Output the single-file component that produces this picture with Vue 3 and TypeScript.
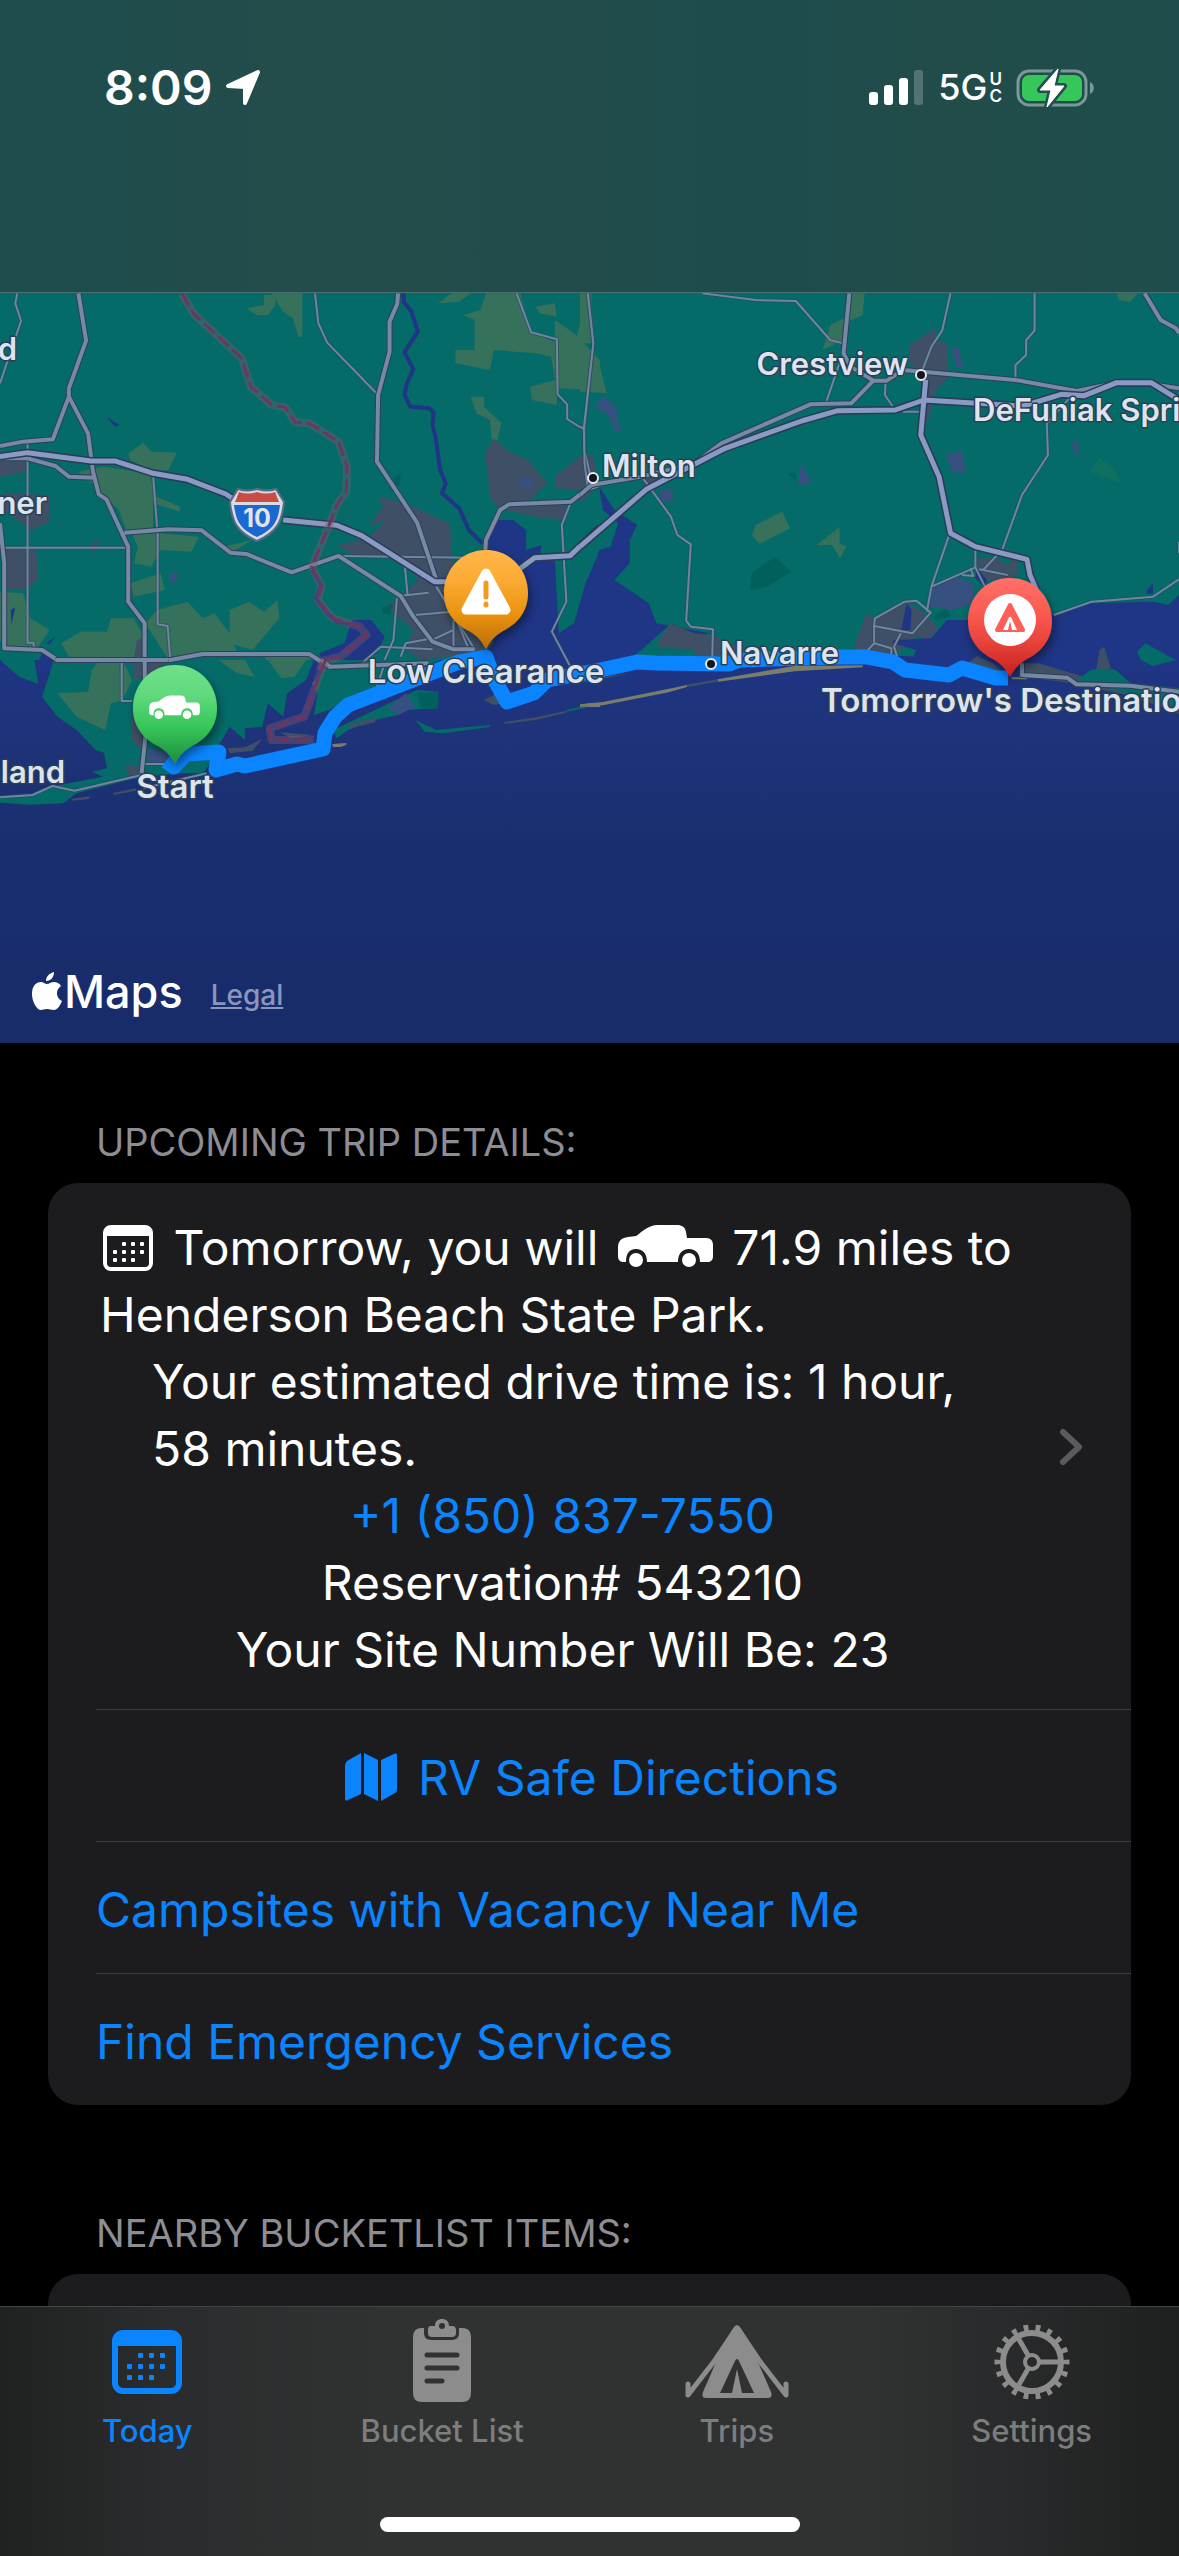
<script setup lang="ts">
interface Shape { fill: string; d: string }
interface Tile {
  id: string
  at: string
  areas: Shape[]
  river?: string
  border?: string
  minor: string
  main?: string
  highway?: string
}
interface Label { text: string; x: number; y: number; anchor: 'start' | 'middle' | 'end'; big?: boolean }

const OLIVE = '#36715b'
const URBAN = '#3f4f66'
const SLATE = '#36517f'
const WATER = '#1f3585'
const LAND = '#046b69'
const FOREST = '#02605c'
const SAND = '#7b7d6c'

const tiles: Tile[] = [
  {
    id: 'northwest',
    at: 'translate(0 -3) scale(.3827 .3333)',
    areas: [
      { fill: OLIVE, d: 'M645 55L690 45V15H720V45L700 75H670ZM710 10H790V140H780L765 85 740 65ZM1145 40L1180 10H1230L1200 35ZM1210 75L1255 60 1270 10H1360L1385 125 1450 155V90L1500 130 1568 210V300L1455 295V345L1390 330 1385 290 1450 270 1440 200 1400 190 1290 180 1280 240 1190 220V180H1240V90ZM1530 10H1545L1550 160 1505 150 1520 80ZM1230 320H1265V350L1310 400 1300 450H1285L1280 390 1245 370ZM335 490L375 458 395 485 462 488 440 540 400 545 340 510ZM1400 50L1450 40 1455 80 1410 70Z' },
      { fill: OLIVE, d: 'M205 545L270 530 390 550 410 620 470 650V665L400 640V720H330L310 660 240 580ZM580 770L660 750 600 790ZM345 730H420L520 740 500 785 420 780 395 830 350 820 360 770ZM340 880L420 850 430 900 350 920ZM0 905L60 910 80 985 130 1020 100 1070H20L0 1050ZM160 1060L210 1025H280L290 985H350L370 1030 375 1140H200ZM410 960L490 935 530 985 560 970 600 1030 620 1090 440 1110 380 1000ZM600 960L650 935 690 965 725 930 730 985 660 1080 600 1060ZM690 1090L820 1085 800 1140H700Z' },
      { fill: URBAN, d: 'M0 510L70 515 68 545 0 560ZM10 610L130 615V695L80 720 10 660ZM10 780H95L100 870 60 900H20ZM1268 490L1290 445 1330 485 1380 510 1430 580 1390 625 1305 655 1280 620ZM1450 560L1520 495H1550L1568 600 1450 595ZM1320 640H1480V690L1400 680 1320 660ZM880 765L960 745 1010 690 965 710 1000 650 990 620 1060 640 1175 700 1180 780 1170 870 1120 900 1040 800H930ZM1010 950L1060 905 1160 800 1300 880V1080L1100 1110 1060 1080 1080 1020ZM235 760L262 750 245 792ZM358 1050L378 1040V1140H345Z' },
      { fill: SLATE, d: 'M1358 560H1393V593H1358ZM445 850L465 845 460 875 442 878Z' },
      { fill: WATER, d: 'M1265 760L1290 690H1340L1375 720V780L1415 765 1410 800 1450 815 1460 1030 1500 1000 1530 880 1568 780V1140H1220L1290 1060 1260 780ZM900 1060L920 990H970L1005 1040 985 1090 900 1140H850L835 1090ZM90 1140L110 1090 150 1115V1140ZM280 382L312 405 300 410ZM28 960L40 952 30 1003ZM120 1060L145 1040 130 1062Z' },
      { fill: FOREST, d: 'M1030 560L1048 553 1042 590 1030 585ZM1000 950L1025 940 1020 975 1000 970Z' },
    ],
    river: 'M1055 10V35L1075 65 1092 125 1057 187 1080 237 1062 285 1057 315 1072 350 1122 355 1133 367 1130 405 1138 440 1150 540 1165 580 1155 610 1200 655 1225 720 1260 760M815 840L840 885 825 925 855 970 880 995 930 1010',
    border: 'M475 10L505 70 632 205 655 290 710 345 745 352 772 397 808 400 885 455 907 530 905 605 880 645 860 705 815 830 840 890 830 930 870 985 940 1010 958 1035 890 1100 845 1112 835 1140',
    minor: 'M45 10L40 40 55 93 35 160 0 280M823 10L832 100 855 158 988 315M1350 10L1388 127 1455 148 1457 313 1482 343V387L1527 420M1537 10L1550 160 1527 420V480L1545 570M72 455V1058H88V1080M10 773H335M400 555L412 735V1003L438 1008 445 1110M885 798L1240 803M1492 635L1468 705 1480 935 1442 1025 1495 1140M1058 830L1065 915M1042 918L1120 908M1037 925L1028 1050 1005 1110M1085 975L1180 965M950 1115L995 1070 1130 1078M1130 1050L1185 1020M1185 990V1078M1047 1100L1060 1060 1130 1045M1140 890L1240 1078M1160 900L1225 1078M1115 790L1145 870M318 1110V1140',
    main: 'M205 10L225 152 180 295V320L230 430 243 545 258 613 278 628 335 770V935L378 1000V1140M180 320L138 448 60 455 0 468M0 505H72L145 528 180 560 250 563M0 700L11 820V1075L110 1080 150 1110H445L530 1092H808L862 1132 970 1122M325 728L440 718 527 721 602 788 643 792 762 847 885 798 1047 918 1080 980 1130 1055 1185 1078H1240M1040 10L1038 42 1018 95V185L988 315 985 515 1090 698 1140 870M1268 780L1270 750 1307 660 1330 643 1492 635 1530 600 1568 585',
    highway: 'M0 500L72 488 238 513H300L400 550 490 568 590 612 620 635M740 690L880 706 945 737 1135 875H1180M1360 835L1397 803 1490 797 1568 712',
  },
  {
    id: 'northeast',
    at: 'translate(580 -3) scale(.382 .3333)',
    areas: [
      { fill: OLIVE, d: 'M0 10H20L35 90V160H0ZM0 185L50 220 70 310 0 305ZM710 10H745L740 75 700 95 690 150 635 180 655 105 690 85ZM450 735L460 705 530 665 550 715 470 762ZM620 765L680 710V760L698 770 680 805 660 765ZM1405 10H1460L1440 35 1410 30Z' },
      { fill: '#10705f', d: 'M1335 545L1360 505 1395 530 1415 578Z' },
      { fill: FOREST, d: 'M445 900L450 850 510 800 553 845 490 890ZM545 550L565 548V575ZM925 980L960 955 970 980 930 990Z' },
      { fill: URBAN, d: 'M863 165L930 115V150L962 160V235L970 260 930 300 910 400 895 370 905 260 863 220ZM0 500H30L35 600 0 640ZM1035 830L1040 805H1090L1140 840 1130 870H1050ZM1115 830L1140 800 1150 860ZM720 1060L750 970 770 985 850 935 900 965 940 1020 910 1050 880 1040 820 1100 720 1085ZM160 560L210 550 200 580 170 590Z' },
      { fill: SLATE, d: 'M40 350L60 318 95 350 100 400 110 430 90 420 75 375ZM957 495L1000 480 1010 548 975 545ZM570 580L580 520 605 575 590 585ZM210 600H243V633H210ZM1285 460L1305 450V505ZM920 895L980 860 1030 880V940L975 960 915 950ZM970 170H990L1003 230 985 235Z' },
      { fill: WATER, d: 'M50 590L90 660 150 705 130 750V820L90 870 180 940 200 1000 340 1030 300 1040 240 1000 140 1100 0 1140V1000L50 780 80 770 100 700 60 660ZM820 1050L920 1045 960 990H1040L1080 1005 1230 975 1340 940 1500 935 1540 945 1568 915V1140H860L880 1080 820 1060ZM1040 835L1065 870 1060 895 1035 865ZM855 940L868 960 865 1020 840 1025ZM1485 900L1500 880V912H1483Z' },
      { fill: URBAN, d: 'M195 1070L235 1000 300 1030 345 1035 440 1080 400 1100H250Z' },
      { fill: LAND, d: 'M140 1100L200 1045 210 1070 300 1080V1105ZM1060 1050L1120 1090 1120 1120Z' },
    ],
    minor: 'M20 10L35 160 10 415 12 520 20 590M0 410L10 415M320 10L460 30 565 33 655 150 688 160M685 200L645 335M800 275L798 315 818 348M845 365H890M970 10L948 122 920 170 895 245M1190 10V122L1168 150V195L1140 225V265M1285 320L1222 400 1225 495 1157 615 1105 780 1055 840M165 565L238 680 255 735 290 763 278 993 290 1010 348 1018 346 1110M965 740L920 890 908 965M920 890L1035 832V780M1035 832L1060 890M1045 838L1120 855M1000 855L1030 858 1022 835M772 985L850 935 880 932 918 968 870 1030 770 1008ZM770 1008V1060L750 1085M770 1060L815 1075V1100M840 1030L822 1070 830 1100M1240 975L1340 935 1500 920 1568 868M1568 755V790',
    main: 'M705 10L690 190 708 230 768 272H803L845 240 1140 270 1300 303 1405 278M768 272L710 340 603 343 370 460 300 520 160 560 30 585 0 615M1478 10L1520 90 1560 115 1568 130M1510 285L1568 295',
    highway: 'M0 770L175 597 380 475 580 393 675 362 825 360 900 330 1160 348 1260 313 1320 317 1405 278H1495L1568 330M905 270L892 435 940 560 970 730 1035 770 1170 808 1178 855 1195 900',
  },
  {
    id: 'southwest',
    at: 'translate(0 367) scale(.3827 .3333)',
    areas: [
      { fill: LAND, d: 'M0 0H90L100 72 50 50ZM140 0H820L800 60 750 100 740 170 700 130 685 200 640 205V240L600 200 575 250 560 260 550 310 530 340H480L370 350 200 400 165 430 80 434 0 428V408L80 405 130 380 270 350 240 335 280 325 270 270 290 235 275 280 250 270 200 210 150 170 110 110 130 40ZM835 50L850 0H1150L920 110 860 150 820 165 830 100 815 70ZM870 210L1090 90 1145 95V145L1060 150 1040 165 980 180 910 210 880 235ZM1085 180L1140 210 1280 195V201L1160 220 1110 215ZM1480 150L1535 136V143L1480 155Z' },
      { fill: OLIVE, d: 'M150 100L230 95 240 30 260 0H320L345 60 320 120 290 130 275 210 200 170ZM570 0H640L665 50 620 40ZM700 0H800L770 50 735 55Z' },
      { fill: URBAN, d: 'M345 160L375 150V280L345 240ZM325 315H370V345H335ZM1265 120L1300 100 1320 130 1290 135ZM345 0H440L400 40 350 60ZM595 265L640 262 685 237 660 272 600 280ZM730 217L790 222 820 225 760 235ZM185 417L235 409 233 417 190 422ZM295 399L355 385V392L297 405ZM1315 187L1400 172 1480 152V158L1400 180 1320 192ZM910 195L985 170 980 187 915 205Z' },
      { fill: SLATE, d: 'M1015 145L1060 100 1085 140 1040 165ZM385 270H470L440 310 385 315Z' },
      { fill: FOREST, d: 'M1090 100L1145 95V145H1100Z' },
      { fill: SAND, d: 'M868 252L905 249V254L890 261H870ZM1535 130H1568V141H1535Z' },
    ],
    border: 'M850 0L795 170 705 205 710 240H820',
    minor: 'M318 0V123H345M0 412L85 405 137 378 195 392 370 345M375 385L540 340M375 312H430M1005 10L985 80',
    main: 'M145 0H440M378 0L380 230 370 340M862 20L1120 10M840 0L862 20',
  },
  {
    id: 'southeast',
    at: 'translate(580 247) scale(.382 .3333)',
    areas: [
      { fill: SAND, d: 'M0 493L60 486 230 447 280 435V441L232 457 60 496 0 501ZM360 418L560 378 740 376V382L562 394 362 425ZM1130 412H1170V418H1130Z' },
      { fill: URBAN, d: 'M280 434L360 418V425L280 441ZM1160 370H1200L1320 410 1568 450V522L1450 470 1280 428 1160 410ZM1010 375L1040 348 1080 370 1110 400ZM1350 400L1360 330 1372 320 1390 385ZM60 410L130 400 60 416Z' },
      { fill: LAND, d: 'M1300 420L1340 388H1400L1440 428 1568 445V500L1450 465ZM1458 335L1480 310 1560 360 1500 378 1468 360ZM0 412L60 408 20 425H0Z' },
    ],
    minor: '',
    main: 'M1157 370V405L1275 413 1300 433 1440 437 1568 455',
  },
]

const labels: Label[] = [
  { text: 'd', x: 17, y: 67, anchor: 'end' },
  { text: 'ner', x: 47, y: 221, anchor: 'end' },
  { text: 'Island', x: 65, y: 490, anchor: 'end' },
  { text: 'Crestview', x: 908, y: 82, anchor: 'end' },
  { text: 'DeFuniak Springs', x: 973, y: 128, anchor: 'start' },
  { text: 'Milton', x: 602, y: 184, anchor: 'start' },
  { text: 'Navarre', x: 720, y: 371, anchor: 'start' },
  { text: 'Start', x: 175, y: 505, anchor: 'middle', big: true },
  { text: 'Low Clearance', x: 486, y: 390, anchor: 'middle', big: true },
  { text: "Tomorrow's Destination", x: 821, y: 419, anchor: 'start', big: true },
]

const towns = [
  { x: 921, y: 82 },
  { x: 593, y: 185 },
  { x: 711, y: 371 },
]

const route = 'M166 468L174 474 186 461 219 459 216 477 237 471 245 473 323 456 325 440 335 424 348 412 413 387 459 369 486 364 494 386 507 409 534 400 547 387 600 377 637 369 656 370 729 371 740 367 840 364 866 364 893 369 905 377 949 382 962 375 996 385 1008 385'

const pin = 'M42 0C66 0 84 19 84 43C84 62 73 74 59 81C50 86 46 92 42 99C38 92 34 86 25 81C11 74 0 62 0 43C0 19 18 0 42 0Z'
const pickup = 'M2 24C2 17 5 14 12 13L20 12C26 8 32 1 42 1H61C66 1 69 3 70 8L71 14H90C95 14 97 17 97 21V32C97 36 95 38 91 38H84C84 30 80 25 73 25S62 30 62 38H31C31 30 27 25 20 25S10 30 10 38H8C4 38 2 36 2 32Z'
const dots: [number, number][] = [[1, 0], [2, 0], [3, 0], [0, 1], [1, 1], [2, 1], [3, 1], [0, 2], [1, 2], [2, 2]]
const spokes = [0, 120, 240]
</script>

<template>
  <div class="screen">
    <header class="status">
      <div class="status-row">
        <div class="clock">
          <span class="time">8:09</span>
          <svg width="38" height="38" viewBox="0 0 38 38" aria-hidden="true">
            <path d="M4 17L34 3 21 34V18Z" fill="#fff" stroke="#fff" stroke-width="4" stroke-linejoin="round" />
          </svg>
        </div>
        <div class="signals">
          <svg width="54" height="36" viewBox="0 0 54 36" aria-hidden="true">
            <g fill="#fff">
              <rect y="22" width="9" height="13" rx="3" />
              <rect x="15" y="15" width="9" height="20" rx="3" />
              <rect x="30" y="8" width="9" height="27" rx="3" />
              <rect x="45" width="9" height="35" rx="3" opacity=".22" />
            </g>
          </svg>
          <span class="network">5G</span>
          <span class="band"><span>U</span><span>C</span></span>
          <svg class="battery" width="79" height="40" viewBox="0 0 79 40" aria-hidden="true">
            <rect x="2" y="3" width="68" height="34" rx="11" fill="none" stroke="#7b9896" stroke-width="3" />
            <rect x="6" y="7" width="60" height="26" rx="7" fill="#35c759" />
            <path d="M74 14C79 16 79 24 74 26Z" fill="#7b9896" />
            <path d="M42 1L24 22H35L31 39 48 18H38Z" fill="#fff" stroke="#20504f" stroke-width="6" stroke-linejoin="round" />
            <path d="M42 1L24 22H35L31 39 48 18H38Z" fill="#fff" stroke="#fff" stroke-width="1" stroke-linejoin="round" />
          </svg>
        </div>
      </div>
    </header>

    <main class="content">
      <section class="map">
        <svg class="map-canvas" viewBox="0 0 1179 750" role="img" aria-label="Route map">
          <defs>
            <linearGradient id="sea" x1="0" y1="360" x2="0" y2="750" gradientUnits="userSpaceOnUse">
              <stop offset="0" stop-color="#1f3585" />
              <stop offset=".22" stop-color="#1e3379" />
              <stop offset=".5" stop-color="#182f6f" />
              <stop offset="1" stop-color="#182b6b" />
            </linearGradient>
            <linearGradient id="green" x1="0" y1="0" x2="0" y2="1">
              <stop offset="0" stop-color="#6fe08a" /><stop offset=".3" stop-color="#62d97e" /><stop offset=".62" stop-color="#36c75a" /><stop offset="1" stop-color="#1f8a3c" />
            </linearGradient>
            <linearGradient id="orange" x1="0" y1="0" x2="0" y2="1">
              <stop offset="0" stop-color="#ffb648" /><stop offset=".3" stop-color="#fcab35" /><stop offset=".65" stop-color="#ea920f" /><stop offset="1" stop-color="#b86e05" />
            </linearGradient>
            <linearGradient id="red" x1="0" y1="0" x2="0" y2="1">
              <stop offset="0" stop-color="#ff7069" /><stop offset=".35" stop-color="#fb5a51" /><stop offset=".65" stop-color="#e8433b" /><stop offset="1" stop-color="#c4201c" />
            </linearGradient>
            <filter id="drop" x="-40%" y="-40%" width="180%" height="180%">
              <feDropShadow dx="2" dy="5" stdDeviation="5" flood-color="#000" flood-opacity=".45" />
            </filter>
          </defs>

          <rect width="1179" height="750" :fill="LAND" />
          <path d="M0 367H600L740 358 866 362 1008 366 1179 360V750H0Z" fill="url(#sea)" />
          <g v-for="t in tiles" :key="t.id" :transform="t.at">
            <path v-for="(a, i) in t.areas" :key="i" :d="a.d" :fill="a.fill" />
          </g>
          <g v-for="t in tiles" :key="t.id + '-lines'" :transform="t.at" class="lines">
            <path v-if="t.river" :d="t.river" class="river" />
            <path :d="t.minor" class="minor-case" />
            <path :d="t.minor" class="minor" />
            <path v-if="t.main" :d="t.main" class="main-case" />
            <path v-if="t.main" :d="t.main" class="main" />
            <path v-if="t.highway" :d="t.highway" class="highway-case" />
            <path v-if="t.highway" :d="t.highway" class="highway" />
            <path v-if="t.border" :d="t.border" class="border-glow" />
            <path v-if="t.border" :d="t.border" class="border" />
          </g>

          <g transform="translate(229 195)">
            <path d="M9 1Q18 4 28 1Q38 4 47 1L55 14C53 34 48 44 28 53C8 44 3 34 1 14Z" fill="#d9dbdf" stroke="#5a6a8c" stroke-width="2" />
            <path d="M10 4Q19 7 28 4Q37 7 46 4L50 14H6Z" fill="#ca4a44" />
            <path d="M5 17H51C49 33 45 41 28 49C11 41 7 33 5 17Z" fill="#1a69d2" />
            <text x="28" y="39" class="shield">10</text>
          </g>

          <path :d="route" class="route" />
          <circle v-for="t in towns" :key="t.x" :cx="t.x" :cy="t.y" r="5" class="town" />
          <text v-for="l in labels" :key="l.text" :x="l.x" :y="l.y" :text-anchor="l.anchor" :class="['label', { big: l.big }]">{{ l.text }}</text>

          <g transform="translate(133 372)">
            <path :d="pin" fill="url(#green)" filter="url(#drop)" />
            <svg x="15" y="30" width="53" height="24" viewBox="0 0 99 45">
              <path :d="pickup" fill="#fff" /><circle cx="20" cy="37" r="8" fill="#fff" /><circle cx="73" cy="37" r="8" fill="#fff" />
            </svg>
          </g>
          <g transform="translate(444 257)">
            <path :d="pin" fill="url(#orange)" filter="url(#drop)" />
            <path d="M42 23L62 60H22Z" fill="#fff" stroke="#fff" stroke-width="9" stroke-linejoin="round" />
            <path d="M42 33V47M42 54V55" stroke="#f09c1e" stroke-width="5" stroke-linecap="round" />
          </g>
          <g transform="translate(968 285)">
            <path :d="pin" fill="url(#red)" filter="url(#drop)" />
            <circle cx="42" cy="42" r="26" fill="#fff" />
            <path d="M42 27L55 52H29Z" fill="#fb5f57" stroke="#fb5f57" stroke-width="4" stroke-linejoin="round" />
            <path d="M41 39H43L49 52H44L42 43 40 52H35Z" fill="#fff" />
          </g>
        </svg>
        <div class="attribution">
          <svg width="30" height="39" viewBox="0 0 30 39" aria-hidden="true">
            <path d="M22 0C22 5 19 9 14 9C14 4 18 1 22 0ZM15 12C17 12 19 10 22 10C25 10 27 11 29 14C23 18 24 26 30 29C28 34 25 38 22 38C19 38 18 37 15 37S11 38 9 38C5 38 0 30 0 22C0 14 4 10 9 10C11 10 13 12 15 12Z" fill="#fff" />
          </svg>
          <span class="brand">Maps</span>
          <a class="legal" href="#legal">Legal</a>
        </div>
      </section>

      <section class="group">
        <h2>UPCOMING TRIP DETAILS:</h2>
        <div class="card">
          <div class="row trip">
            <div class="trip-text">
              <p>
                <svg class="day" width="52" height="48" viewBox="0 0 52 48" aria-hidden="true">
                  <rect x="3" y="3" width="46" height="42" rx="6" fill="none" stroke="#fff" stroke-width="4" />
                  <path d="M3 12V7Q3 2 8 2H44Q49 2 49 7V12Z" fill="#fff" />
                  <rect v-for="([c, r], i) in dots" :key="i" :x="11 + c * 9" :y="18 + r * 8" width="4" height="4" rx="1" fill="#fff" />
                </svg>
                Tomorrow, you will
                <svg class="truck" width="99" height="45" viewBox="0 0 99 45" aria-hidden="true">
                  <path :d="pickup" fill="#fff" /><circle cx="20" cy="36" r="7" fill="#fff" /><circle cx="73" cy="36" r="7" fill="#fff" />
                </svg>
                71.9 miles to<br>Henderson Beach State Park.
              </p>
              <p class="indent">Your estimated drive time is: 1 hour,<br>58 minutes.</p>
              <p class="center"><a href="tel:+18508377550">+1 (850) 837-7550</a></p>
              <p class="center">Reservation# 543210</p>
              <p class="center">Your Site Number Will Be: 23</p>
            </div>
            <button class="open" type="button" aria-label="Open trip details">
              <svg width="24" height="38" viewBox="0 0 24 38" aria-hidden="true">
                <path d="M4 4L20 19 4 34" fill="none" stroke="#5b5b5f" stroke-width="6" stroke-linecap="round" stroke-linejoin="round" />
              </svg>
            </button>
          </div>
          <button class="row action middle" type="button">
            <svg width="54" height="50" viewBox="0 0 54 50" aria-hidden="true">
              <path d="M1 14Q1 11 3 9L17 1V42L4 48Q1 50 1 46ZM20 1L34 8V49L20 42ZM37 8L50 2Q53 0 53 4V37Q53 40 51 41L37 49Z" fill="#0a84ff" />
            </svg>
            RV Safe Directions
          </button>
          <button class="row action" type="button">Campsites with Vacancy Near Me</button>
          <button class="row action" type="button">Find Emergency Services</button>
        </div>
      </section>

      <section class="group second">
        <h2>NEARBY BUCKETLIST ITEMS:</h2>
        <div class="card"><div class="row"></div></div>
      </section>
    </main>

    <nav class="tabs">
      <div class="tab-row">
        <button class="tab active" type="button" aria-current="page">
          <svg width="70" height="84" viewBox="0 0 70 84" aria-hidden="true">
            <rect x="3" y="14" width="64" height="58" rx="8" fill="none" stroke="currentColor" stroke-width="6" />
            <path d="M2 27V20Q2 12 10 12H60Q68 12 68 20V27Z" fill="currentColor" />
            <rect v-for="([c, r], i) in dots" :key="i" :x="15 + c * 11" :y="34 + r * 11" width="5" height="5" rx="1" fill="currentColor" />
          </svg>
          <span>Today</span>
        </button>
        <button class="tab" type="button">
          <svg width="70" height="84" viewBox="0 0 70 84" aria-hidden="true">
            <path d="M15 9H17V14Q17 21 24 21H45Q52 21 52 14V9H55Q64 9 64 18V74Q64 83 55 83H15Q6 83 6 74V18Q6 9 15 9Z" fill="#8c8c8d" />
            <path d="M24 7H28C28 2 31 0 35 0S42 2 42 7H45Q49 7 49 11V14Q49 18 45 18H25Q21 18 21 14V10Q21 7 24 7Z" fill="#8c8c8d" />
            <circle cx="35" cy="7" r="3" fill="#303131" />
            <path d="M20 36H50M20 49H50M20 62H35" stroke="#303131" stroke-width="5" stroke-linecap="round" />
          </svg>
          <span>Bucket List</span>
        </button>
        <button class="tab" type="button">
          <svg width="104" height="84" viewBox="0 0 104 84" aria-hidden="true">
            <path d="M52 10L32 40M52 10L72 40" stroke="#8c8c8d" stroke-width="7" stroke-linecap="round" />
            <path d="M3 65V76L34 36M101 65V76L70 36" fill="none" stroke="#8c8c8d" stroke-width="5" stroke-linecap="round" stroke-linejoin="round" />
            <path d="M48 10Q52 6 56 10L69 34 86 73Q88 79 83 79H21Q16 79 18 73L35 34Z" fill="#8c8c8d" />
            <path d="M50 42Q52 38 54 42L69 74H57L52 50 47 74H35Z" fill="#303131" />
          </svg>
          <span>Trips</span>
        </button>
        <button class="tab" type="button">
          <svg width="78" height="84" viewBox="0 0 78 84" aria-hidden="true">
            <g fill="none" stroke="#8c8c8d">
              <circle cx="39" cy="43" r="34" stroke-width="7" pathLength="180" stroke-dasharray="4 6" stroke-dashoffset="2" />
              <circle cx="39" cy="43" r="29" stroke-width="6" />
              <circle cx="39" cy="43" r="7" stroke-width="4" />
              <path v-for="s in spokes" :key="s" d="M47 43H67" stroke-width="5" :transform="`rotate(${s} 39 43)`" />
            </g>
          </svg>
          <span>Settings</span>
        </button>
      </div>
      <div class="home-bar"></div>
    </nav>
  </div>
</template>

<style>
body {
  background: #000;
}
</style>

<style scoped>
.screen {
  display: flex;
  flex-direction: column;
  height: 100vh;
  background: #000;
  color: #fff;
  font-family: Inter, Roboto, sans-serif;
  font-size: 48px;
  line-height: 67px;
}
button {
  padding: 0;
  border: 0;
  background: none;
  font: inherit;
  color: inherit;
}
a {
  color: #0a84ff;
  text-decoration: none;
}
svg {
  flex: none;
}

.status {
  flex: none;
  height: 292px;
  border-bottom: 1px solid #4a716f;
  background: linear-gradient(90deg, #1d4d4d 0%, #244c4b 26%, #224c4b 48%, #1d4c4d 64%, #224c4a 80%, #1d4d4c 100%);
}
.status-row {
  display: flex;
  align-items: center;
  justify-content: space-between;
  padding: 54px 84px 0 104px;
}
.clock,
.signals {
  display: flex;
  align-items: center;
}
.clock {
  gap: 12px;
}
.time {
  font-size: 48px;
  font-weight: 600;
}
.network {
  margin-left: 15px;
  font-size: 36px;
  font-weight: 500;
}
.band {
  display: flex;
  flex-direction: column;
  margin-left: 2px;
  font-size: 17px;
  font-weight: 600;
  line-height: 17px;
}
.battery {
  margin-left: 14px;
}

.content {
  flex: 1;
  min-height: 0;
  overflow: hidden;
}
.map {
  position: relative;
}
.map-canvas {
  display: block;
  width: 100%;
}
.lines path {
  fill: none;
  vector-effect: non-scaling-stroke;
  stroke-linejoin: round;
}
.river {
  stroke: #1f3585;
  stroke-width: 4;
}
.minor-case {
  stroke: #2c4560;
  stroke-width: 4;
  opacity: 0.5;
}
.minor {
  stroke: #71859f;
  stroke-width: 2;
}
.main-case {
  stroke: #2b4059;
  stroke-width: 6;
}
.main {
  stroke: #7789a4;
  stroke-width: 4;
}
.highway-case {
  stroke: #2a3a57;
  stroke-width: 8;
}
.highway {
  stroke: #8a9ac3;
  stroke-width: 5;
}
.border-glow {
  stroke: #7a5a70;
  stroke-width: 8;
  opacity: 0.4;
}
.border {
  stroke: #70355f;
  stroke-width: 3;
  stroke-dasharray: 14 5;
}
.route {
  fill: none;
  stroke: #0a84ff;
  stroke-width: 15;
  stroke-linejoin: round;
}
.town {
  fill: #15151c;
  stroke: #e6eaf0;
  stroke-width: 2;
}
.label {
  fill: #dde4ee;
  font-size: 31px;
  font-weight: 600;
  paint-order: stroke;
  stroke: #2a3f55;
  stroke-width: 3px;
  stroke-linejoin: round;
}
.big {
  font-size: 33px;
}
.shield {
  fill: #e3e5ea;
  font-size: 25px;
  font-weight: 700;
  text-anchor: middle;
}
.attribution {
  position: absolute;
  bottom: 14px;
  left: 32px;
  display: flex;
  align-items: center;
}
.brand {
  margin-left: 2px;
  font-size: 45px;
  font-weight: 500;
}
.legal {
  margin: 8px 0 0 28px;
  color: #8a96bb;
  font-size: 28px;
  font-weight: 500;
  text-decoration: underline;
}

.group {
  padding: 72px 48px 0;
}
.group.second {
  padding-top: 101px;
}
h2 {
  margin: 0;
  padding: 0 48px 14px;
  color: #8d8d93;
  font-size: 38px;
  font-weight: 400;
  line-height: 54px;
}
.card {
  overflow: hidden;
  padding-left: 48px;
  border-radius: 30px;
  background: #1c1c1e;
}
.row {
  display: flex;
  align-items: center;
  box-sizing: border-box;
  width: 100%;
  min-height: 132px;
}
.row + .row {
  border-top: 1px solid #3d3d40;
}
.trip {
  gap: 34px;
  padding: 31px 48px 26px 0;
}
.trip-text {
  flex: 1;
  padding-left: 4px;
}
p {
  margin: 0;
}
.day {
  margin: 0 6px 0 2px;
  vertical-align: -7px;
}
.truck {
  margin: 0 4px;
  vertical-align: -4px;
}
.indent {
  padding-left: 52px;
}
.center {
  text-align: center;
}
.action {
  padding-top: 3px;
  color: #0a84ff;
  text-align: left;
}
.middle {
  justify-content: center;
  gap: 20px;
  padding-right: 44px;
}

.tabs {
  flex: none;
  height: 249px;
  border-top: 1px solid #454547;
  background: linear-gradient(90deg, #202222 0%, #2b2c2d 14%, #303131 32%, #303131 74%, #292a2b 86%, #1e1f1f 100%);
}
.tab-row {
  display: flex;
  padding-top: 12px;
}
.tab {
  display: flex;
  flex: 1;
  flex-direction: column;
  align-items: center;
  gap: 8px;
  color: #7c7d7e;
  font-size: 31px;
  font-weight: 500;
  line-height: 40px;
}
.tab.active {
  color: #0a84ff;
}
.home-bar {
  width: 420px;
  height: 15px;
  margin: 66px auto 0;
  border-radius: 8px;
  background: #fff;
}
</style>
